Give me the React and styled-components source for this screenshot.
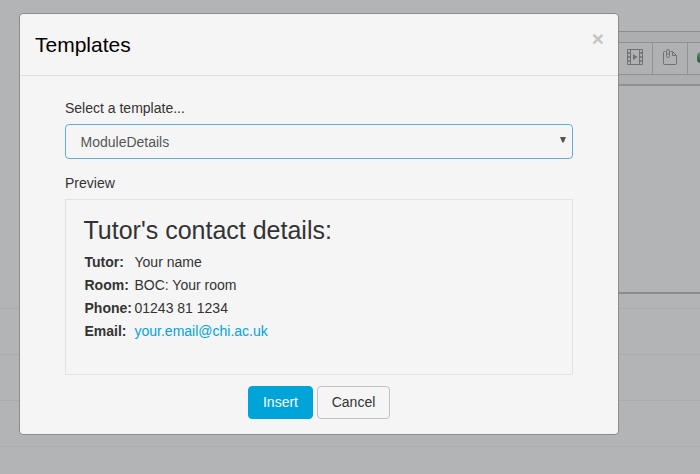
import React from 'react';
import styled, { createGlobalStyle } from 'styled-components';

const GlobalStyle = createGlobalStyle`
  * { box-sizing: border-box; }
  body {
    margin: 0;
    background: #b3b4b6;
    color: #333;
    font: 14px/20px "Liberation Sans", Arial, sans-serif;
  }
`;

const Screen = styled.div`
  position: relative;
  width: 700px;
  height: 474px;
  overflow: hidden;
  background: #b3b4b6;
`;

const Page = styled.div`
  display: flex;
  flex-direction: column;
  padding-top: 31px;
`;

const Editor = styled.div`
  margin-left: 65px;
  height: 263px;
  border-top: 1px solid #8c8d8f;
  border-bottom: 2px solid #8b8c8e;
`;

const ToolArea = styled.div`
  height: 54px;
  padding-top: 10px;
  background: #adaeb0;
  border-bottom: 2px solid #8f9092;
`;

const Toolbar = styled.div`
  display: flex;
  justify-content: flex-end;
  height: 33px;
  background: #b0b1b3;
  border: solid #8f9092;
  border-width: 1px 0;
`;

const Tool = styled.div`
  display: flex;
  align-items: flex-start;
  justify-content: ${(p) => (p.$last ? 'flex-start' : 'center')};
  flex: none;
  width: ${(p) => p.$width}px;
  padding-top: 6px;
  border-right: ${(p) => (p.$last ? '0' : '1px solid #929395')};
  overflow: hidden;
  svg { display: block; flex: none; }
`;

const Ball = styled.div`
  flex: none;
  width: 14px;
  height: 11px;
  margin: 3px 0 0 9px;
  border-radius: 4px;
  background: linear-gradient(#6c9a7c, #397852 45%, #24533c);
`;

const Rows = styled.div`
  padding-top: 14px;
`;

const Rule = styled.div`
  height: 46px;
  border-top: 1px solid #abacae;
`;

const Dialog = styled.section`
  position: absolute;
  left: 19px;
  top: 13px;
  width: 600px;
  height: 422px;
  border: 1px solid #8b8c8e;
  border-radius: 4px;
  background: #f5f5f5;
`;

const Header = styled.header`
  display: flex;
  justify-content: space-between;
  height: 62px;
  padding: 15px 14px 0 15px;
  border-bottom: 1px solid #ddd;
`;

const Title = styled.h1`
  margin: 0;
  color: #000;
  font-size: 21px;
  font-weight: 400;
  line-height: 32px;
`;

const Close = styled.button`
  height: 20px;
  padding: 0;
  border: 0;
  background: none;
  color: #c4c4c4;
  font: bold 21px/20px "Liberation Sans", Arial, sans-serif;
`;

const Content = styled.div`
  padding: 22px 44px 0 45px;
`;

const Label = styled.div`
  height: 20px;
`;

const Select = styled.div`
  display: flex;
  align-items: center;
  justify-content: space-between;
  width: 508px;
  height: 35px;
  margin: 6px 0 14px;
  padding: 0 6px 0 14.5px;
  border: 1px solid #5eaee3;
  border-radius: 4px;
  color: #555;
  svg { margin-bottom: 3px; }
`;

const Preview = styled.div`
  width: 508px;
  height: 176px;
  margin-top: 6px;
  padding: 14px 18px 14px 17.5px;
  border: 1px solid #e3e3e3;
`;

const Heading = styled.h2`
  margin: 0 0 4px;
  font-size: 25px;
  font-weight: 400;
  line-height: 33px;
`;

const Details = styled.dl`
  display: grid;
  grid-template-columns: 50px 1fr;
  grid-auto-rows: 23px;
  margin: 0;
  line-height: 23px;
  padding-left: 1px;
  dt { font-weight: 700; white-space: nowrap; }
  dd { margin: 0; }
`;

const Email = styled.a`
  color: #00a4d8;
  text-decoration: none;
`;

const Actions = styled.div`
  display: flex;
  gap: 4px;
  padding: 11px 0 0 183px;
`;

const Button = styled.button`
  width: ${(p) => (p.$primary ? 65 : 73)}px;
  height: 33px;
  padding: 0 0 2px;
  border: 1px solid ${(p) => (p.$primary ? '#00a4d8' : '#c2c2c2')};
  border-radius: 4px;
  background: ${(p) => (p.$primary ? '#00a4d8' : '#f5f5f5')};
  color: ${(p) => (p.$primary ? '#fff' : '#333')};
  font: 14px/20px "Liberation Sans", Arial, sans-serif;
`;

const FilmIcon = () => (
  <svg width="16" height="16" viewBox="0 0 16 16" fill="none" stroke="#707173">
    <path d="M.5.5h15v15H.5zM3.5.5v15M12.5.5v15" />
    <path d="M0 4h3M0 8h3M0 12h3M13 4h3M13 8h3M13 12h3" strokeWidth="1.5" />
    <path d="M6 5l4.500 3L6 11z" fill="#707173" stroke="none" />
  </svg>
);

const ClipIcon = () => (
  <svg width="14" height="16" viewBox="0 0 14 16" fill="none" stroke="#707173">
    <path d="M2.500 2.500h-1q-1 0-1 1v11q0 1 1 1h11q1 0 1-1v-8l-4-4H7.500M9.500 2.500v4h4" />
    <path d="M5 3.500V6M3.500 5.500V7q0 1.500 1.500 1.500T6.500 7V2Q6.500.5 5 .5T3.500 2v4" strokeWidth=".9" />
  </svg>
);

const ArrowIcon = () => (
  <svg width="6" height="6" viewBox="0 0 6 6">
    <path d="M0 0h6L3.700 5.500H2.300z" fill="#555" />
  </svg>
);

const details = [
  ['Tutor:', 'Your name'],
  ['Room:', 'BOC: Your room'],
  ['Phone:', '01243 81 1234'],
];

export default function App() {
  return (
    <Screen>
      <GlobalStyle />
      <Page>
        <Editor>
          <ToolArea>
            <Toolbar>
              <Tool $width={35}><FilmIcon /></Tool>
              <Tool $width={35}><ClipIcon /></Tool>
              <Tool $width={12} $last><Ball /></Tool>
            </Toolbar>
          </ToolArea>
        </Editor>
        <Rows><Rule /><Rule /><Rule /><Rule /></Rows>
      </Page>
      <Dialog>
        <Header>
          <Title>Templates</Title>
          <Close aria-label="Close">×</Close>
        </Header>
        <Content>
          <Label>Select a template...</Label>
          <Select><span>ModuleDetails</span><ArrowIcon /></Select>
          <Label>Preview</Label>
          <Preview>
            <Heading>Tutor's contact details:</Heading>
            <Details>
              {details.map(([name, value]) => (
                <React.Fragment key={name}><dt>{name}</dt><dd>{value}</dd></React.Fragment>
              ))}
              <dt>Email:</dt><dd><Email>your.email@chi.ac.uk</Email></dd>
            </Details>
          </Preview>
          <Actions>
            <Button $primary>Insert</Button>
            <Button>Cancel</Button>
          </Actions>
        </Content>
      </Dialog>
    </Screen>
  );
}
